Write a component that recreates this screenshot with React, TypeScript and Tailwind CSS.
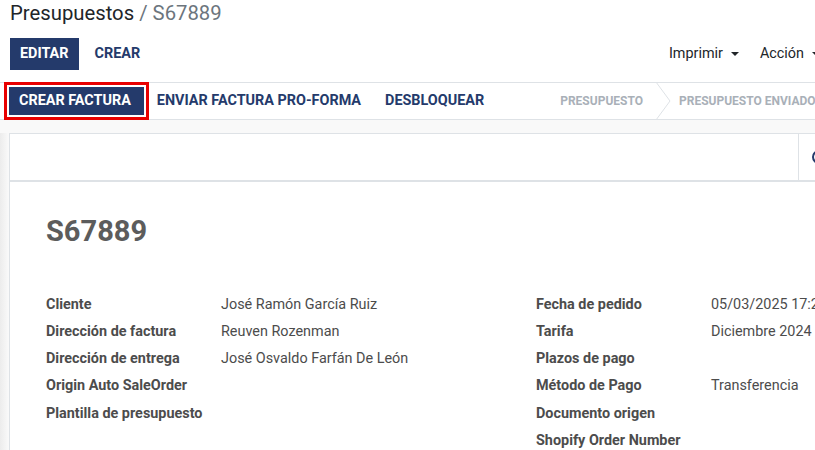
import React from 'react'

const leftFields = [
  { label: 'Cliente', value: 'José Ramón García Ruiz' },
  { label: 'Dirección de factura', value: 'Reuven Rozenman' },
  { label: 'Dirección de entrega', value: 'José Osvaldo Farfán De León' },
  { label: 'Origin Auto SaleOrder', value: '' },
  { label: 'Plantilla de presupuesto', value: '' },
]

const rightFields = [
  { label: 'Fecha de pedido', value: '05/03/2025 17:26:41' },
  { label: 'Tarifa', value: 'Diciembre 2024 (MXN)' },
  { label: 'Plazos de pago', value: '' },
  { label: 'Método de Pago', value: 'Transferencia' },
  { label: 'Documento origen', value: '' },
  { label: 'Shopify Order Number', value: '' },
]

function Caret() {
  return <span className="ml-2 inline-block h-0 w-0 border-x-[4px] border-t-[4px] border-x-transparent border-t-current align-middle" />
}

function FieldGroup({ fields }: { fields: { label: string; value: string }[] }) {
  return (
    <div className="w-[490px] shrink-0">
      {fields.map((f) => (
        <div key={f.label} className="flex h-[27.2px] items-center text-[14.4px]">
          <div className="w-[175px] shrink-0 font-bold text-[#4c4c4c]">{f.label}</div>
          <div className="whitespace-nowrap text-[#4c4c4c]">{f.value}</div>
        </div>
      ))}
    </div>
  )
}

export default function App() {
  return (
    <div className="h-[450px] w-[815px] overflow-hidden bg-white font-['Roboto',sans-serif] text-[#4c4c4c]">
      <div className="w-[1000px]">
        {/* control panel */}
        <div className="px-[10px]">
          <div className="h-[27px] text-[20.3px] leading-[27px]">
            <span className="text-[#212529]">Presupuestos</span>
            <span className="text-[#6c757d]"> / S67889</span>
          </div>
          <div className="mt-[11px] flex h-[32px] w-[810px] items-center">
            <button className="h-[32px] bg-[#243a6b] px-[10px] text-[14.4px] font-bold text-white">EDITAR</button>
            <button className="ml-[6px] px-[10px] text-[14.4px] font-bold text-[#243a6b]">CREAR</button>
            <div className="ml-auto flex items-center text-[14.4px] text-[#212529]">
              <span className="flex items-center">Imprimir<Caret /></span>
              <span className="ml-[21px] flex items-center">Acción<Caret /></span>
            </div>
          </div>
        </div>

        {/* status bar */}
        <div className="mt-[12px] flex h-[38px] items-center border-y border-[#dee2e6] bg-white">
          <div className="ml-[4px] border-[3px] border-[#e80000] p-[2px]">
            <button className="h-[28px] bg-[#243a6b] pl-[10px] pr-[13px] text-[14.4px] font-bold text-white">CREAR FACTURA</button>
          </div>
          <button className="ml-[8px] text-[14.4px] font-bold text-[#243a6b]">ENVIAR FACTURA PRO-FORMA</button>
          <button className="ml-[24px] text-[14.4px] font-bold text-[#243a6b]">DESBLOQUEAR</button>
          <div className="ml-[76px] flex h-full items-center text-[12px] font-bold text-[#a9b0b8]">
            <span>PRESUPUESTO</span>
            <svg width="16" height="38" viewBox="0 0 16 38" className="ml-[12px]">
              <path d="M1 0 L15 19 L1 38" fill="none" stroke="#dee2e6" strokeWidth="1" />
            </svg>
            <span className="ml-[8px] whitespace-nowrap">PRESUPUESTO ENVIADO</span>
          </div>
        </div>

        {/* sheet area */}
        <div className="flex h-[400px] bg-[#f9f9f9] pt-[13px]">
          <div className="w-[9px] shrink-0 bg-gradient-to-r from-[#ececec] to-[#fafafa]" />
          <div className="flex-1 border border-[#dee2e6] bg-white">
            <div className="flex h-[48px] border-b-2 border-[#dee2e6]">
              <div className="w-[789px] border-r border-[#dee2e6]" />
              <div className="flex items-center pl-[13px]">
                <span className="inline-block h-[14px] w-[14px] rounded-full border-2 border-[#243a6b]" />
              </div>
            </div>
            <div className="px-[36px] pt-[31px]">
              <div className="text-[29px] font-bold leading-[36px] text-[#5c5c5c]">S67889</div>
              <div className="mt-[42px] flex">
                <FieldGroup fields={leftFields} />
                <FieldGroup fields={rightFields} />
              </div>
            </div>
          </div>
        </div>
      </div>
    </div>
  )
}
